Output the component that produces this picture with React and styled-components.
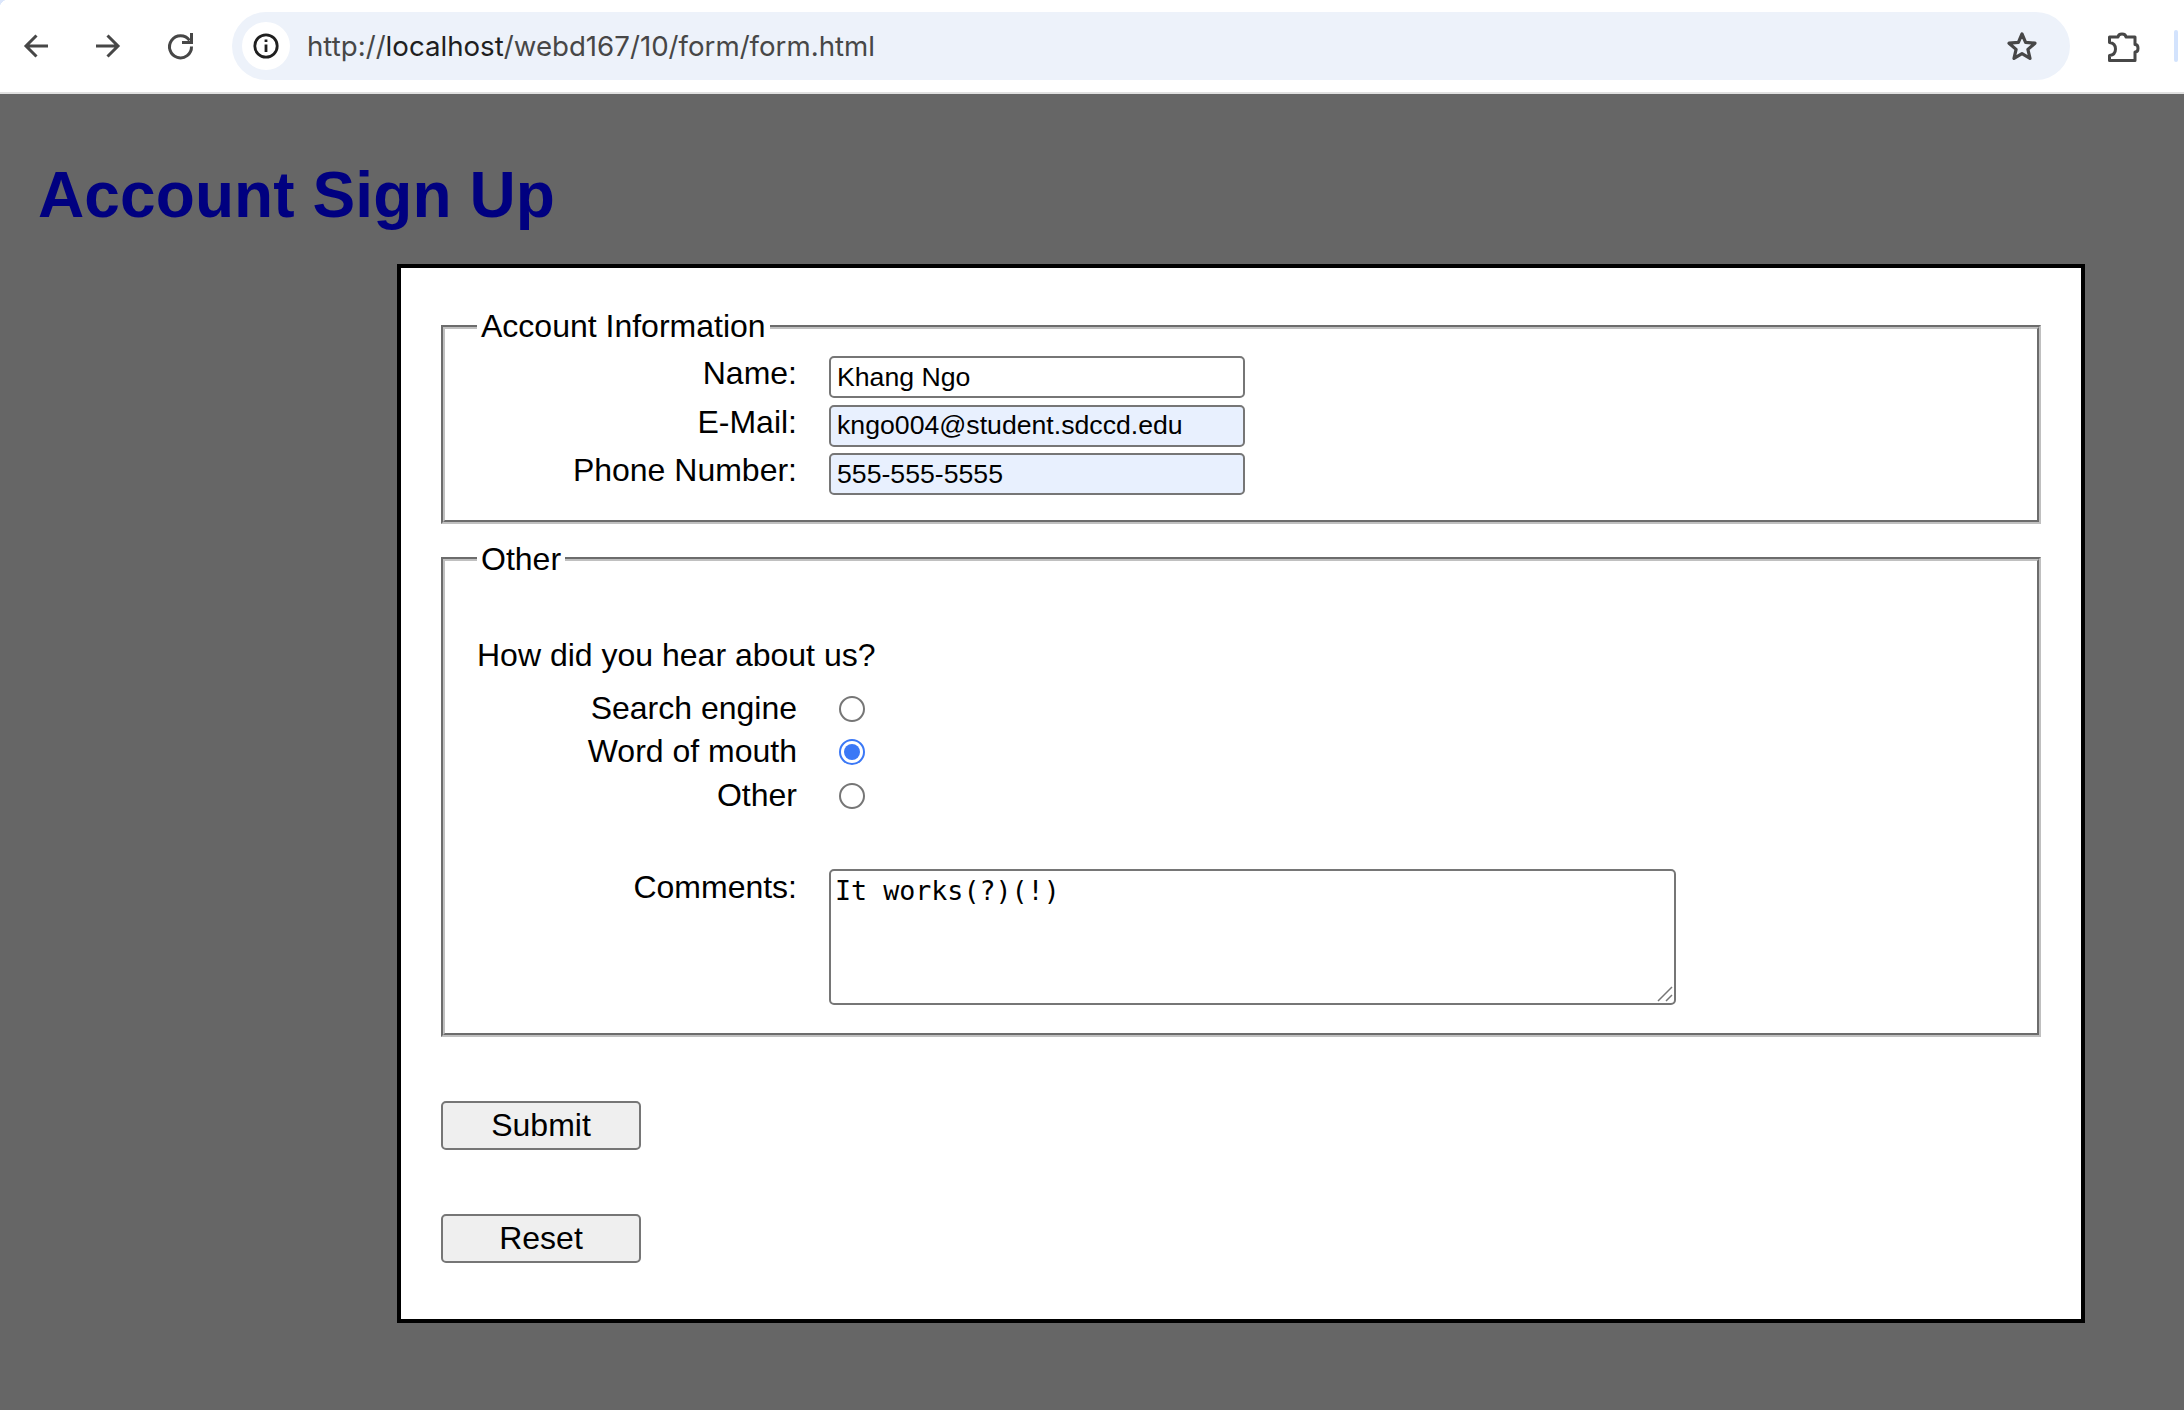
import React from 'react';
import styled, { createGlobalStyle } from 'styled-components';

const GlobalStyle = createGlobalStyle`
  html, body {
    margin: 0;
    padding: 0;
    background: #666666;
  }
  body {
    font-family: "Liberation Sans", Arial, sans-serif;
    font-size: 32px;
    color: #000;
  }
`;

const Toolbar = styled.div`
  position: relative;
  height: 92px;
  background: #fff;
  border-bottom: 2px solid #e0e0e0;
  display: flex;
  align-items: center;
  padding-left: 18px;
  /* window corner showing behind the toolbar */
  &::before {
    content: '';
    position: absolute;
    top: 0;
    left: 0;
    width: 8px;
    height: 8px;
    background: radial-gradient(circle at 8px 8px, transparent 8px, #dbe6fb 8.5px);
  }
`;

const NavIcon = styled.svg`
  width: 36px;
  height: 36px;
  margin-right: 36px;
  flex: none;
  fill: none;
  stroke: #474747;
  stroke-width: 3;
`;

const AddressBar = styled.div`
  width: 1838px;
  height: 68px;
  margin-left: -2px;
  border-radius: 34px;
  background: #edf2fa;
  display: flex;
  align-items: center;
  padding: 0 32px 0 10px;
  box-sizing: border-box;
`;

const InfoBadge = styled.div`
  width: 48px;
  height: 48px;
  border-radius: 50%;
  background: #fff;
  display: flex;
  align-items: center;
  justify-content: center;
  flex: none;
`;

const Url = styled.div`
  margin-left: 17px;
  font-family: Inter, "Liberation Sans", sans-serif;
  font-size: 27.66px;
  color: #474747;
  flex: 1;
  white-space: nowrap;
`;

const Host = styled.span`
  color: #1f1f1f;
`;

const Extras = styled.div`
  display: flex;
  align-items: center;
  margin-left: 37px;
`;

const SideSliver = styled.div`
  width: 4px;
  height: 32px;
  margin-left: 33px;
  border-radius: 2px;
  background: #d3e3fd;
`;

const Heading = styled.h1`
  margin: 0;
  padding: 64px 0 0 38px;
  height: 106px;
  box-sizing: content-box;
  font-size: 64px;
  line-height: 74px;
  font-weight: bold;
  letter-spacing: 0.1px;
  color: #000080;
`;

const Panel = styled.form`
  box-sizing: border-box;
  width: 1688px;
  margin-left: 397px;
  border: 4px solid #000;
  background: #fff;
  padding: 40px 40px 56px;
`;

const Group = styled.fieldset`
  margin: 0 0 ${(p) => p.$gap || 0}px;
  padding: 11px 32px ${(p) => p.$bottom}px;
  min-width: 0;
  border: 4px groove #c0c0c0;
`;

const Caption = styled.legend`
  margin-left: 0;
  padding: 0 4px;
  line-height: 37px;
`;

const Rows = styled.div`
  display: grid;
  grid-template-columns: 320px auto;
  column-gap: 32px;
  justify-content: start;
  row-gap: ${(p) => p.$gap}px;
`;

const FieldLabel = styled.label`
  text-align: right;
  line-height: 37px;
  margin-top: -1px;
`;

const OptionLabel = styled.span`
  text-align: right;
  line-height: 37px;
`;

const TextBox = styled.input`
  box-sizing: border-box;
  width: 416px;
  height: 42px;
  margin: 0;
  padding: 2px 6px;
  border: 2px solid #767676;
  border-radius: 5px;
  font-family: "Liberation Sans", Arial, sans-serif;
  font-size: 26.67px;
  color: #000;
  background: ${(p) => (p.$filled ? '#e8f0fe' : '#fff')};
  outline: none;
`;

const Question = styled.p`
  margin: 48px 0 16px;
  line-height: 37px;
`;

const RadioMark = styled.span`
  box-sizing: border-box;
  width: 26px;
  height: 26px;
  margin: 6px 0 5px 10px;
  border-radius: 50%;
  border: 2px solid ${(p) => (p.$on ? '#3b78f6' : '#767676')};
  background: #fff;
  display: flex;
  align-items: center;
  justify-content: center;
  &::after {
    content: '';
    width: 16px;
    height: 16px;
    border-radius: 50%;
    background: ${(p) => (p.$on ? '#3b78f6' : 'transparent')};
  }
`;

const CommentRow = styled.div`
  display: grid;
  grid-template-columns: 320px auto;
  column-gap: 32px;
  justify-content: start;
  margin-top: 54px;
`;

const CommentLabel = styled(FieldLabel)`
  margin-top: 1px;
`;

const CommentWrap = styled.div`
  position: relative;
  margin-top: 1px;
`;

const CommentBox = styled.textarea`
  box-sizing: border-box;
  display: block;
  width: 847px;
  height: 136px;
  margin: 0;
  padding: 4px;
  border: 2px solid #767676;
  border-radius: 5px;
  font-family: "DejaVu Sans Mono", monospace;
  font-size: 26.67px;
  line-height: 31px;
  color: #000;
  outline: none;
  resize: none;
`;

const Grip = styled.svg`
  position: absolute;
  right: 3px;
  bottom: 3px;
  width: 16px;
  height: 16px;
  stroke: #767676;
  stroke-width: 1.5;
  fill: none;
`;

const ActionButton = styled.button`
  box-sizing: border-box;
  display: block;
  width: 200px;
  height: 49px;
  margin: ${(p) => p.$top}px 0 0;
  padding: 0;
  border: 2px solid #767676;
  border-radius: 5px;
  background: #efefef;
  font-family: "Liberation Sans", Arial, sans-serif;
  font-size: 32px;
  color: #000;
`;

const radios = [
  { label: 'Search engine', on: false },
  { label: 'Word of mouth', on: true },
  { label: 'Other', on: false },
];

export default function App() {
  return (
    <>
      <GlobalStyle />
      <Toolbar>
        <NavIcon viewBox="0 0 36 36">
          <path d="M30 18H9M18.500 7.500 8 18l10.500 10.500" />
        </NavIcon>
        <NavIcon viewBox="0 0 36 36">
          <path d="M6 18h21M17.500 7.500 28 18 17.500 28.500" />
        </NavIcon>
        <NavIcon viewBox="0 0 36 36">
          <path d="M27.500 12.500A11 11 0 1 0 29.500 18.500" />
          <path d="M29.500 5v9.500H20" />
        </NavIcon>
        <AddressBar>
          <InfoBadge>
            <svg width="28" height="28" viewBox="0 0 28 28" fill="none" stroke="#1f1f1f" strokeWidth="2.800">
              <circle cx="14" cy="14" r="11.200" />
              <path d="M14 12.500v7.500M14 7.500v2.600" />
            </svg>
          </InfoBadge>
          <Url>http://<Host>localhost</Host>/webd167/10/form/form.html</Url>
          <svg width="32" height="32" viewBox="0 0 32 32" fill="none" stroke="#474747" strokeWidth="3.200" strokeLinejoin="round">
            <path d="M16 4l3.600 8.400 9.400.8-7.100 6.200 2.100 9-8-4.700-8 4.700 2.100-9-7.100-6.200 9.400-.8z" />
          </svg>
        </AddressBar>
        <Extras>
          <svg width="34" height="34" viewBox="0 0 34 34" fill="none" stroke="#474747" strokeWidth="3" strokeLinejoin="round">
            <path d="M5 8h6c.5-4 7.500-4 8 0h9v7.500c4 0 4 7.500 0 7.500v8.500H2.500v-5c4-.5 6-3 6-6.500s-2-6-6-6.500V8z" />
          </svg>
          <SideSliver />
        </Extras>
      </Toolbar>

      <Heading>Account Sign Up</Heading>

      <Panel>
        <Group $bottom={24.8} $gap={17}>
          <Caption>Account Information</Caption>
          <Rows $gap={6.5}>
            <FieldLabel>Name:</FieldLabel>
            <TextBox defaultValue="Khang Ngo" />
            <FieldLabel>E-Mail:</FieldLabel>
            <TextBox $filled defaultValue="kngo004@student.sdccd.edu" />
            <FieldLabel>Phone Number:</FieldLabel>
            <TextBox $filled defaultValue="555-555-5555" />
          </Rows>
        </Group>

        <Group $bottom={28}>
          <Caption>Other</Caption>
          <Question>How did you hear about us?</Question>
          <Rows $gap={6.5}>
            {radios.map((r) => (
              <React.Fragment key={r.label}>
                <OptionLabel>{r.label}</OptionLabel>
                <RadioMark $on={r.on} />
              </React.Fragment>
            ))}
          </Rows>
          <CommentRow>
            <CommentLabel>Comments:</CommentLabel>
            <CommentWrap>
              <CommentBox defaultValue="It works(?)(!)" />
              <Grip viewBox="0 0 16 16">
                <path d="M1 15 15 1M9 15l6-6" />
              </Grip>
            </CommentWrap>
          </CommentRow>
        </Group>

        <ActionButton type="button" $top={64}>Submit</ActionButton>
        <ActionButton type="button" $top={64}>Reset</ActionButton>
      </Panel>
    </>
  );
}
